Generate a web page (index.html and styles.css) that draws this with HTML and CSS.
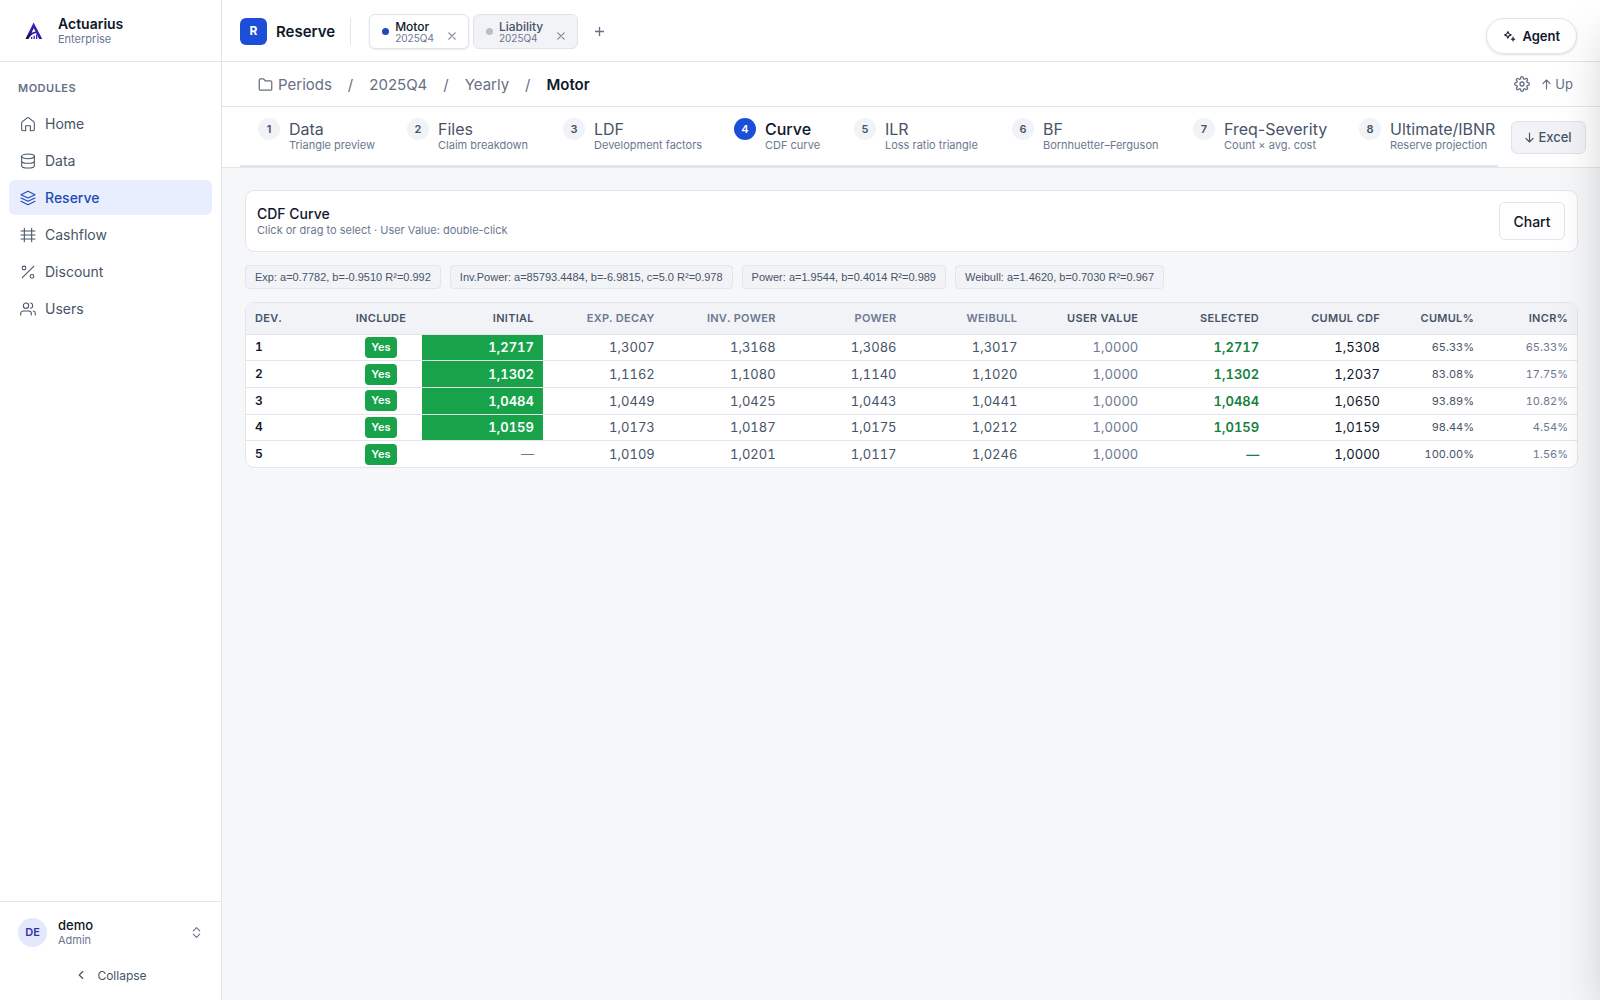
FILE: index.html
```html
<!DOCTYPE html>
<html lang="en">
<head>
    <meta charset="UTF-8">
    <meta name="viewport" content="width=device-width, initial-scale=1.0">
    <title>Actuarius - Reserve</title>
    <link rel="stylesheet" href="styles.css">
</head>
<body>
    <aside class="sidebar">
        <div class="brand">
            <svg class="logo" viewBox="0 0 20 20">
                <defs>
                    <linearGradient id="logoFill" x1="0" y1="1" x2="1" y2="0">
                        <stop offset="0" stop-color="#0b0b2e"/>
                        <stop offset="0.4" stop-color="#2a1ca0"/>
                        <stop offset="1" stop-color="#4436d8"/>
                    </linearGradient>
                </defs>
                <path fill="url(#logoFill)" d="M9.600 1.500 18.300 18h-3.200L9.800 7.200 7.600 11.800c2-1.100 4-1.600 6-1.600l.8 1.500C10 11.800 6.500 13.800 4.600 18H1.500z"/>
                <path fill="#3222b8" d="M7 16h1.300v2H7zM9.500 14.800h1.300V18H9.500zM12 13.500h1.300V18H12z"/>
            </svg>
            <div>
                <div class="brand-name">Actuarius</div>
                <div class="small-text">Enterprise</div>
            </div>
        </div>
        <nav class="modules">
            <h2>MODULES</h2>
            <a href="#"><svg class="icon" viewBox="0 0 24 24"><path d="M2.500 10.500a2 2 0 0 1 .8-1.600l7.400-6.100a2 2 0 0 1 2.600 0l7.400 6.100a2 2 0 0 1 .8 1.600V20a2 2 0 0 1-2 2H15.500v-7.500h-7V22h-4a2 2 0 0 1-2-2z"/></svg>Home</a>
            <a href="#"><svg class="icon" viewBox="0 0 24 24"><ellipse cx="12" cy="5" rx="9.500" ry="3.500"/><path d="M2.500 5v14c0 1.900 4.200 3.500 9.500 3.500s9.500-1.600 9.500-3.500V5M2.500 12c0 1.900 4.200 3.500 9.500 3.500s9.500-1.600 9.500-3.500"/></svg>Data</a>
            <a href="#" class="active"><svg class="icon" viewBox="0 0 24 24"><path d="m12 2 10.500 5L12 12 1.500 7zM1.500 12 12 17l10.500-5M1.500 17 12 22l10.500-5"/></svg>Reserve</a>
            <a href="#"><svg class="icon" viewBox="0 0 24 24"><path d="M1.500 6h21M1.500 12h21M1.500 18h21M6.500 2v20M17.500 2v20"/></svg>Cashflow</a>
            <a href="#"><svg class="icon" viewBox="0 0 24 24"><path d="M20.500 3.500 3.500 20.500"/><circle cx="6" cy="6" r="2.800"/><circle cx="18" cy="18.500" r="2.800"/></svg>Discount</a>
            <a href="#"><svg class="icon" viewBox="0 0 24 24"><path d="M17 21v-2a4 4 0 0 0-4-4H5a4 4 0 0 0-4 4v2M23 21v-2a4 4 0 0 0-3-3.900M16 3.100a4 4 0 0 1 0 7.800"/><circle cx="9" cy="7" r="4"/></svg>Users</a>
        </nav>
        <div class="account">
            <button class="user">
                <span class="avatar">DE</span>
                <span class="user-info">
                    <span class="user-name">demo</span>
                    <span class="small-text">Admin</span>
                </span>
                <svg class="updown" viewBox="0 0 24 24"><path d="m6 9 6-6 6 6M6 15l6 6 6-6"/></svg>
            </button>
            <button class="collapse"><svg viewBox="0 0 24 24"><path d="m15 18-6-6 6-6"/></svg>Collapse</button>
        </div>
    </aside>

    <main class="main">
        <header class="topbar">
            <span class="badge">R</span>
            <h1>Reserve</h1>
            <div class="tabs">
                <div class="tab open">
                    <span class="dot"></span>
                    <a href="#">Motor<small>2025Q4</small></a>
                    <button aria-label="Close Motor"><svg viewBox="0 0 10 10"><path d="m1 1 8 8M9 1 1 9"/></svg></button>
                </div>
                <div class="tab">
                    <span class="dot"></span>
                    <a href="#">Liability<small>2025Q4</small></a>
                    <button aria-label="Close Liability"><svg viewBox="0 0 10 10"><path d="m1 1 8 8M9 1 1 9"/></svg></button>
                </div>
            </div>
            <button class="add" aria-label="New tab"><svg viewBox="0 0 10 10"><path d="M5 0v10M0 5h10"/></svg></button>
            <button class="agent">
                <svg viewBox="0 0 24 24"><path d="M9 3c.8 4 2 5.200 6 6-4 .8-5.200 2-6 6-.8-4-2-5.200-6-6 4-.8 5.200-2 6-6z"/><path class="solid" d="M18.500 13c.5 2.800 1.200 3.500 4 4-2.800.5-3.500 1.200-4 4-.5-2.800-1.200-3.500-4-4 2.800-.5 3.500-1.200 4-4z"/></svg>
                Agent
            </button>
        </header>

        <div class="crumbbar">
            <nav class="crumbs">
                <a href="#"><svg class="folder" viewBox="0 0 24 24"><path d="M22 19a2 2 0 0 1-2 2H4a2 2 0 0 1-2-2V5a2 2 0 0 1 2-2h5l2.500 3H20a2 2 0 0 1 2 2z"/></svg>Periods</a>
                <span>/</span>
                <a href="#">2025Q4</a>
                <span>/</span>
                <a href="#">Yearly</a>
                <span>/</span>
                <strong>Motor</strong>
            </nav>
            <button class="gear" aria-label="Settings">
                <svg viewBox="0 0 24 24"><circle cx="12" cy="12" r="3"/><path d="M19.400 15a1.650 1.650 0 0 0 .33 1.820l.06.06a2 2 0 1 1-2.830 2.830l-.06-.06a1.650 1.650 0 0 0-2.800 1.170V21a2 2 0 0 1-4 0v-.09A1.650 1.650 0 0 0 7.180 19.730l-.06.06a2 2 0 1 1-2.830-2.830l.06-.06A1.650 1.650 0 0 0 3.090 14H3a2 2 0 0 1 0-4h.09A1.650 1.650 0 0 0 4.270 7.180l-.06-.06a2 2 0 1 1 2.830-2.830l.06.06A1.650 1.650 0 0 0 10 3.090V3a2 2 0 0 1 4 0v.09a1.650 1.650 0 0 0 2.820 1.180l.06-.06a2 2 0 1 1 2.830 2.830l-.06.06A1.650 1.650 0 0 0 20.910 10H21a2 2 0 0 1 0 4h-.09a1.650 1.650 0 0 0-1.510 1z"/></svg>
            </button>
            <a href="#" class="up"><svg viewBox="0 0 10 12"><path d="M5 11V1M1 5l4-4 4 4"/></svg>Up</a>
        </div>

        <div class="stepbar">
            <nav class="steps">
                <a href="#"><i>1</i><span>Data<small>Triangle preview</small></span></a>
                <a href="#"><i>2</i><span>Files<small>Claim breakdown</small></span></a>
                <a href="#"><i>3</i><span>LDF<small>Development factors</small></span></a>
                <a href="#" class="current"><i>4</i><span>Curve<small>CDF curve</small></span></a>
                <a href="#"><i>5</i><span>ILR<small>Loss ratio triangle</small></span></a>
                <a href="#"><i>6</i><span>BF<small>Bornhuetter–Ferguson</small></span></a>
                <a href="#"><i>7</i><span>Freq-Severity<small>Count × avg. cost</small></span></a>
                <a href="#"><i>8</i><span>Ultimate/IBNR<small>Reserve projection</small></span></a>
            </nav>
            <button class="excel"><svg viewBox="0 0 10 12"><path d="M5 1v10M1 7l4 4 4-4"/></svg>Excel</button>
        </div>

        <section class="content">
            <div class="card">
                <div>
                    <h3>CDF Curve</h3>
                    <p class="small-text">Click or drag to select · User Value: double-click</p>
                </div>
                <button class="chart">Chart</button>
            </div>

            <div class="chips">
                <span>Exp: a=0.7782, b=-0.9510 R²=0.992</span>
                <span>Inv.Power: a=85793.4484, b=-6.9815, c=5.0 R²=0.978</span>
                <span>Power: a=1.9544, b=0.4014 R²=0.989</span>
                <span>Weibull: a=1.4620, b=0.7030 R²=0.967</span>
            </div>

            <div class="table-box">
                <table>
                    <colgroup>
                        <col class="col-narrow"><col class="col-include">
                        <col span="8">
                        <col class="col-narrow"><col class="col-narrow">
                    </colgroup>
                    <thead>
                        <tr>
                            <th>DEV.</th><th>INCLUDE</th><th>INITIAL</th>
                            <th class="light">EXP. DECAY</th><th class="light">INV. POWER</th><th class="light">POWER</th><th class="light">WEIBULL</th>
                            <th>USER VALUE</th><th>SELECTED</th><th>CUMUL CDF</th><th>CUMUL%</th><th>INCR%</th>
                        </tr>
                    </thead>
                    <tbody>
                        <tr><td>1</td><td><button>Yes</button></td><td class="picked">1,2717</td><td>1,3007</td><td>1,3168</td><td>1,3086</td><td>1,3017</td><td class="user-value">1,0000</td><td class="selected">1,2717</td><td class="cdf">1,5308</td><td class="pct">65.33%</td><td class="pct incr">65.33%</td></tr>
                        <tr><td>2</td><td><button>Yes</button></td><td class="picked">1,1302</td><td>1,1162</td><td>1,1080</td><td>1,1140</td><td>1,1020</td><td class="user-value">1,0000</td><td class="selected">1,1302</td><td class="cdf">1,2037</td><td class="pct">83.08%</td><td class="pct incr">17.75%</td></tr>
                        <tr><td>3</td><td><button>Yes</button></td><td class="picked">1,0484</td><td>1,0449</td><td>1,0425</td><td>1,0443</td><td>1,0441</td><td class="user-value">1,0000</td><td class="selected">1,0484</td><td class="cdf">1,0650</td><td class="pct">93.89%</td><td class="pct incr">10.82%</td></tr>
                        <tr><td>4</td><td><button>Yes</button></td><td class="picked">1,0159</td><td>1,0173</td><td>1,0187</td><td>1,0175</td><td>1,0212</td><td class="user-value">1,0000</td><td class="selected">1,0159</td><td class="cdf">1,0159</td><td class="pct">98.44%</td><td class="pct incr">4.54%</td></tr>
                        <tr><td>5</td><td><button>Yes</button></td><td class="empty">—</td><td>1,0109</td><td>1,0201</td><td>1,0117</td><td>1,0246</td><td class="user-value">1,0000</td><td class="selected">—</td><td class="cdf">1,0000</td><td class="pct">100.00%</td><td class="pct incr">1.56%</td></tr>
                    </tbody>
                </table>
            </div>
        </section>
    </main>

    <!-- agent drawer, closed: only its shadow shows -->
    <div class="drawer"></div>
</body>
</html>
```
FILE: styles.css
```css
* {
    box-sizing: border-box;
}

body {
    margin: 0;
    display: flex;
    min-height: 100vh;
    background: #f5f7f9;
    color: #0f172a;
    font-family: Inter, "Liberation Sans", sans-serif;
    font-size: 14px;
    overflow-x: hidden;
}

h1, h2, h3, p {
    margin: 0;
}

a {
    color: inherit;
    text-decoration: none;
}

button {
    margin: 0;
    padding: 0;
    border: none;
    background: none;
    color: inherit;
    font: inherit;
    cursor: pointer;
}

svg {
    flex: none;
    fill: none;
    stroke: currentColor;
    stroke-width: 2;
    stroke-linecap: round;
    stroke-linejoin: round;
}

small {
    display: block;
}

.small-text {
    font-size: 11px;
    line-height: 14px;
    color: #6b7890;
}

/* sidebar */
.sidebar {
    flex: none;
    width: 222px;
    display: flex;
    flex-direction: column;
    background: #fff;
    border-right: 1px solid #e2e5ea;
}

.brand {
    display: flex;
    align-items: center;
    gap: 14px;
    height: 62px;
    padding: 0 24px;
    border-bottom: 1px solid #e2e5ea;
}

.logo {
    width: 20px;
    height: 20px;
    stroke: none;
}

.brand-name {
    font-size: 14px;
    line-height: 17px;
    font-weight: 600;
}

.modules {
    flex: 1;
    display: flex;
    flex-direction: column;
    gap: 2px;
    padding: 18px 9px;
}

.modules h2 {
    margin: 0 9px 8px;
    font-size: 11px;
    line-height: 16px;
    font-weight: 600;
    letter-spacing: 0.5px;
    color: #667085;
}

.modules a {
    display: flex;
    align-items: center;
    gap: 9px;
    height: 35px;
    padding: 0 11px;
    border-radius: 6px;
    color: #475467;
}

.modules a.active {
    background: #e8eefe;
    color: #1e4bb8;
    font-weight: 500;
}

.icon {
    width: 16px;
    height: 16px;
    stroke-width: 1.6;
}

.account {
    padding: 15px 18px 12px;
    border-top: 1px solid #e2e5ea;
}

.user {
    display: flex;
    align-items: center;
    width: 100%;
    gap: 11px;
    text-align: left;
}

.avatar {
    width: 29px;
    height: 29px;
    border-radius: 50%;
    background: #e3e8fd;
    color: #3730a3;
    font-size: 11px;
    line-height: 28px;
    font-weight: 600;
    text-align: center;
}

.user-info {
    flex: 1;
    display: flex;
    flex-direction: column;
}

.user-name {
    font-size: 13px;
    line-height: 16px;
    font-weight: 500;
}

.updown {
    width: 13px;
    height: 13px;
    color: #667085;
}

.collapse {
    display: flex;
    justify-content: center;
    align-items: center;
    gap: 9px;
    width: 100%;
    height: 26px;
    margin-top: 15px;
    font-size: 12px;
    color: #475467;
}

.collapse svg {
    width: 14px;
    height: 14px;
}

/* top bar */
.main {
    flex: 1;
    min-width: 0;
}

.topbar {
    display: flex;
    align-items: center;
    height: 62px;
    padding: 2px 23px 0 18px;
    background: #fff;
    border-bottom: 1px solid #e2e5ea;
}

.badge {
    width: 27px;
    height: 27px;
    border-radius: 6px;
    background: #1d4ed8;
    color: #fff;
    font-size: 12px;
    line-height: 26px;
    font-weight: 700;
    text-align: center;
}

.topbar h1 {
    margin: 0 18px 0 9px;
    padding-right: 15px;
    border-right: 1px solid #e2e5ea;
    font-size: 15px;
    line-height: 27px;
    font-weight: 600;
}

.tabs {
    display: flex;
    gap: 4px;
}

.tab {
    display: flex;
    align-items: center;
    height: 35px;
    padding: 0 12px;
    border: 1px solid #dfe3e9;
    border-radius: 6px;
    background: #f1f3f7;
    color: #475467;
}

.tab.open {
    background: #fff;
    color: #0f172a;
    box-shadow: 0 1px 2px rgba(0, 0, 0, 0.08);
}

.dot {
    width: 7px;
    height: 7px;
    margin-right: 6px;
    border-radius: 50%;
    background: #b9bec6;
}

.tab.open .dot {
    background: #1e4bb8;
}

.tab a {
    font-size: 12px;
    line-height: 12px;
    font-weight: 500;
}

.tab small {
    font-size: 10px;
    line-height: 10px;
    font-weight: 400;
    color: #6b7890;
}

.tab button {
    margin: 8px 0 0 14px;
    line-height: 0;
    color: #7c8798;
}

.tab button svg {
    width: 8px;
    height: 8px;
    stroke-width: 1.5;
}

.add {
    margin-left: 17px;
    line-height: 0;
    color: #667085;
}

.add svg {
    width: 9px;
    height: 9px;
    stroke-width: 1.5;
}

.agent {
    display: flex;
    align-items: center;
    gap: 6px;
    height: 36px;
    margin: 9px 0 0 auto;
    padding: 0 16px;
    border: 1px solid #e2e5ea;
    border-radius: 18px;
    background: #fff;
    box-shadow: 0 1px 3px rgba(0, 0, 0, 0.12);
    font-size: 13px;
    font-weight: 600;
}

.agent svg {
    width: 13px;
    height: 13px;
}

.agent .solid {
    fill: currentColor;
    stroke-width: 1;
}

/* breadcrumbs */
.crumbbar {
    display: flex;
    align-items: center;
    height: 45px;
    padding: 0 27px 0 36px;
    background: #fff;
    border-bottom: 1px solid #e2e5ea;
    color: #667085;
}

.crumbs {
    flex: 1;
    display: flex;
    align-items: center;
    gap: 16px;
    font-size: 15px;
}

.crumbs a {
    display: flex;
    align-items: center;
    gap: 5px;
}

.crumbs strong {
    font-weight: 600;
    color: #0f172a;
}

.folder {
    width: 15px;
    height: 15px;
}

.gear {
    line-height: 0;
}

.gear svg {
    width: 16px;
    height: 16px;
}

.up {
    display: flex;
    align-items: center;
    gap: 4px;
    margin-left: 12px;
    font-size: 13px;
}

.up svg, .excel svg {
    width: 9px;
    height: 11px;
    stroke-width: 1.3;
}

/* steps */
.stepbar {
    display: flex;
    align-items: center;
    gap: 13px;
    height: 61px;
    padding: 0 14px 0 18px;
    background: #fff;
    border-bottom: 1px solid #e2e5ea;
}

.steps {
    flex: 1;
    align-self: stretch;
    display: grid;
    grid-template-columns: 149fr 156fr 171fr 120fr 158fr 181fr 166fr 157fr;
    padding-top: 10px;
    border-bottom: 2px solid #e2e5ea;
}

.steps a {
    display: flex;
    gap: 9px;
    min-width: 0;
    padding-left: 18px;
    font-size: 16px;
    line-height: 24px;
    color: #475467;
    white-space: nowrap;
}

.steps i {
    flex: none;
    width: 22px;
    height: 22px;
    margin-top: 1px;
    border-radius: 50%;
    background: #f1f3f7;
    font-size: 11px;
    line-height: 22px;
    font-style: normal;
    font-weight: 600;
    text-align: center;
}

.steps small {
    font-size: 11px;
    line-height: 9px;
    color: #6b7890;
}

.steps .current {
    color: #0f172a;
    font-weight: 500;
}

.steps .current i {
    background: #1d4ed8;
    color: #fff;
}

.steps .current small {
    font-weight: 400;
}

.excel {
    display: flex;
    justify-content: center;
    align-items: center;
    gap: 4px;
    width: 75px;
    height: 33px;
    border: 1px solid #dfe3e9;
    border-radius: 6px;
    background: #f1f3f7;
    font-size: 13px;
    font-weight: 500;
    color: #475467;
}

/* content */
.content {
    display: flex;
    flex-direction: column;
    gap: 13px;
    padding: 22px 22px 22px 23px;
}

.card {
    display: flex;
    justify-content: space-between;
    align-items: center;
    height: 62px;
    padding: 0 12px 0 11px;
    border: 1px solid #e2e5ea;
    border-radius: 9px;
    background: #fff;
}

.card h3 {
    font-size: 14px;
    line-height: 18px;
    font-weight: 500;
}

.chart {
    width: 66px;
    height: 38px;
    border: 1px solid #e2e5ea;
    border-radius: 6px;
    background: #fff;
    font-size: 14px;
    font-weight: 500;
}

.chips {
    display: flex;
    gap: 9px;
}

.chips span {
    height: 24px;
    padding: 0 9px;
    border: 1px solid #e2e5ea;
    border-radius: 4px;
    background: #f1f3f7;
    font-family: "Liberation Sans", Arial, sans-serif;
    font-size: 11px;
    line-height: 22px;
    color: #475467;
}

.table-box {
    border: 1px solid #e2e5ea;
    border-radius: 9px;
    background: #fff;
    overflow: hidden;
}

table {
    width: 100%;
    height: 164px;
    table-layout: fixed;
    border-collapse: collapse;
    font-variant-numeric: tabular-nums;
}

.col-narrow {
    width: 94px;
}

.col-include {
    width: 82px;
}

th {
    height: 31px;
    padding: 0 9px;
    background: #f1f3f7;
    font-size: 11px;
    font-weight: 600;
    letter-spacing: 0.3px;
    text-align: right;
    color: #475467;
}

th.light {
    color: #6b7890;
}

td {
    padding: 0 9px;
    border-top: 1px solid #e2e5ea;
    font-size: 13px;
    line-height: 24px;
    text-align: right;
    color: #475467;
}

th:first-child, td:first-child {
    text-align: left;
}

td:first-child {
    font-size: 12px;
    font-weight: 600;
    color: #0f172a;
}

th:nth-child(2), td:nth-child(2) {
    text-align: center;
}

td button {
    display: block;
    width: 32px;
    height: 21px;
    margin: 0 auto;
    border-radius: 4px;
    background: #18a34a;
    color: #fff;
    font-size: 11px;
    line-height: 21px;
    font-weight: 600;
}

td.picked {
    background: #18a34a;
    color: #fff;
    font-weight: 600;
}

td.user-value, td.empty {
    color: #6b7890;
}

td.selected {
    color: #15803d;
    font-weight: 600;
}

td.cdf {
    color: #0f172a;
}

td.pct {
    font-size: 11px;
}

td.incr {
    color: #6b7890;
}

.drawer {
    position: fixed;
    top: 0;
    bottom: 0;
    left: 100%;
    width: 400px;
    box-shadow: 0 25px 50px -12px rgba(0, 0, 0, 0.25);
    pointer-events: none;
}
```
